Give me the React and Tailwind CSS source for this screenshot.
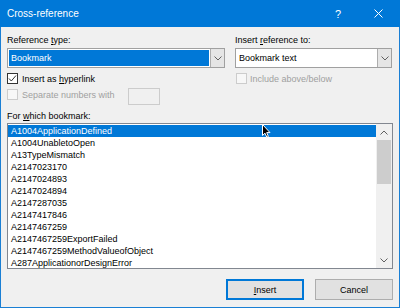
import React from 'react'

const bookmarks = [
  'A1004ApplicationDefined',
  'A1004UnabletoOpen',
  'A13TypeMismatch',
  'A2147023170',
  'A2147024893',
  'A2147024894',
  'A2147287035',
  'A2147417846',
  'A2147467259',
  'A2147467259ExportFailed',
  'A2147467259MethodValueofObject',
  'A287ApplicationorDesignError',
]

function Chevron({ up = false, color = '#606060' }) {
  return (
    <svg width="8" height="5" viewBox="0 0 8 5">
      <path
        d={up ? 'M0.5 4.5 L4 1 L7.5 4.5' : 'M0.5 0.5 L4 4 L7.5 0.5'}
        fill="none"
        stroke={color}
        strokeWidth="1"
      />
    </svg>
  )
}

function Checkbox({ checked, disabled }) {
  return (
    <div
      className={
        'w-[11px] h-[11px] border shrink-0 flex items-center justify-center ' +
        (disabled ? 'border-[#cccccc] bg-[#f7f7f7]' : 'border-[#333333] bg-white')
      }
    >
      {checked && (
        <svg width="9" height="9" viewBox="0 0 9 9">
          <path d="M1 4.5 L3.3 7 L8 1.5" fill="none" stroke="#333" strokeWidth="1" />
        </svg>
      )}
    </div>
  )
}

function Combo({ value, selected }) {
  return (
    <div className="mt-[2px] h-[20px] flex border border-[#a0a0a0] bg-white">
      <div className="flex-1 p-px">
        <div
          className={
            'h-full pl-[2px] flex items-center ' +
            (selected ? 'bg-[#0078d7] text-white' : 'text-black')
          }
        >
          {value}
        </div>
      </div>
      <div className="w-[14px] bg-[#e5e5e5] border-l border-[#adadad] flex items-center justify-center">
        <Chevron />
      </div>
    </div>
  )
}

export default function App() {
  return (
    <div className="relative w-[400px] h-[308px] flex flex-col font-['Liberation_Sans',Arial,sans-serif] text-[9px] leading-[12px] text-black select-none">
      {/* Title bar */}
      <div className="h-[27px] shrink-0 bg-[#0078d7] flex items-center text-white">
        <span className="flex-1 pl-[7px] text-[10px]">Cross-reference</span>
        <div className="w-[40px] h-full flex items-center justify-center text-[11px] font-light">?</div>
        <div className="w-[40px] h-full mr-[2px] flex items-center justify-center">
          <svg width="9" height="9" viewBox="0 0 9 9">
            <path d="M0.5 0.5 L8.5 8.5 M8.5 0.5 L0.5 8.5" stroke="#fff" strokeWidth="1" />
          </svg>
        </div>
      </div>

      {/* Body */}
      <div className="flex-1 bg-[#f0f0f0] border-x border-b border-[#1a7fd4] px-[6px] pt-[7px]">
        <div className="grid grid-cols-[218px_157px] gap-x-[10px]">
          <div>
            <div>
              Reference <span className="underline">t</span>ype:
            </div>
            <Combo value="Bookmark" selected />
            <div className="mt-[5px] h-[11px] flex items-center gap-[4px]">
              <Checkbox checked />
              <span>
                Insert as <span className="underline">h</span>yperlink
              </span>
            </div>
            <div className="mt-[4px] h-[17px] flex items-start">
              <div className="w-[121px] h-[13px] flex items-center gap-[4px] text-[#a0a0a0]">
                <Checkbox disabled />
                <span>Separate numbers with</span>
              </div>
              <div className="w-[32px] h-[17px] border border-[#cccccc] bg-[#f0f0f0]" />
            </div>
          </div>
          <div>
            <div>
              Insert <span className="underline">r</span>eference to:
            </div>
            <Combo value="Bookmark text" />
            <div className="mt-[5px] ml-px h-[11px] flex items-center gap-[3px] text-[#a0a0a0]">
              <Checkbox disabled />
              <span>Include above/below</span>
            </div>
          </div>
        </div>

        <div className="mt-[5px]">
          For <span className="underline">w</span>hich bookmark:
        </div>

        {/* List box */}
        <div className="mt-px h-[146px] flex border border-[#828790] bg-white">
          <div className="flex-1 pt-px overflow-hidden">
            {bookmarks.map((b, i) => (
              <div
                key={b}
                className={
                  'h-[12px] leading-[12px] pl-[3px] whitespace-nowrap ' +
                  (i === 0 ? 'bg-[#0078d7] text-white' : '')
                }
              >
                {b}
              </div>
            ))}
          </div>
          <div className="w-[16px] bg-[#f0f0f0] flex flex-col">
            <div className="h-[16px] flex items-center justify-center">
              <Chevron up />
            </div>
            <div className="mx-px h-[44px] bg-[#cdcdcd]" />
            <div className="flex-1" />
            <div className="h-[16px] flex items-center justify-center">
              <Chevron />
            </div>
          </div>
        </div>

        {/* Buttons */}
        <div className="mt-[10px] flex justify-end gap-[11px]">
          <button className="w-[78px] h-[21px] border-2 border-[#0078d7] bg-[#e1e1e1] flex items-center justify-center">
            <span>
              <span className="underline">I</span>nsert
            </span>
          </button>
          <button className="w-[78px] h-[21px] border border-[#adadad] bg-[#e1e1e1] flex items-center justify-center">
            Cancel
          </button>
        </div>
      </div>

      {/* Mouse pointer */}
      <svg className="absolute left-[262px] top-[124px]" width="9" height="14" viewBox="0 0 9 14">
        <path
          d="M0.5 0.5 L0.5 11.5 L3 9.2 L4.8 13.2 L6.4 12.5 L4.7 8.6 L8 8.6 Z"
          fill="#000"
          stroke="#fff"
          strokeWidth="1"
        />
      </svg>
    </div>
  )
}
